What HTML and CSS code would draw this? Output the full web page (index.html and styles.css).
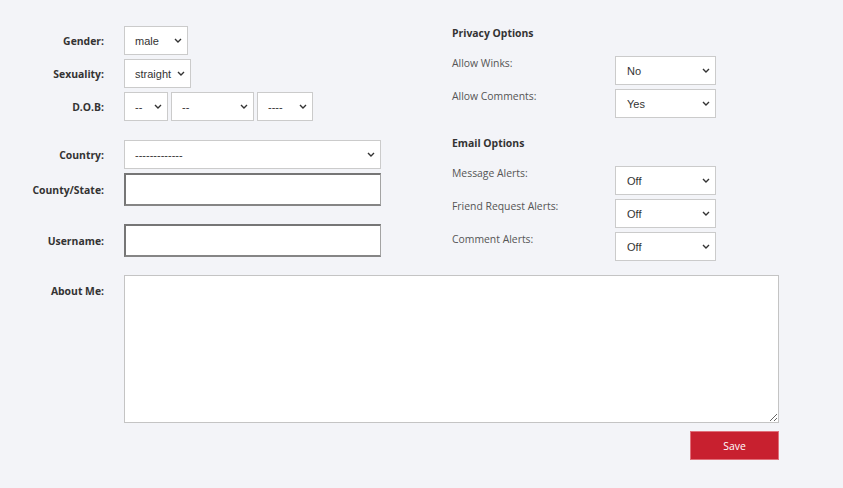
FILE: index.html
```html
<!DOCTYPE html>
<html>
<head>
<meta charset="utf-8">
<link rel="stylesheet" href="styles.css">
</head>
<body>
<form class="page">
  <div class="top">
    <div class="left">
      <div class="row">
        <label class="lbl">Gender:</label>
        <select class="sel w-gender"><option>male</option></select>
      </div>
      <div class="row">
        <label class="lbl">Sexuality:</label>
        <select class="sel w-sex"><option>straight</option></select>
      </div>
      <div class="row">
        <label class="lbl">D.O.B:</label>
        <div class="dob">
          <select class="sel w-d1"><option>--</option></select>
          <select class="sel w-d2"><option>--</option></select>
          <select class="sel w-d3"><option>----</option></select>
        </div>
      </div>
      <div class="row sp">
        <label class="lbl">Country:</label>
        <select class="sel w-wide"><option>-------------</option></select>
      </div>
      <div class="row">
        <label class="lbl">County/State:</label>
        <input class="txt" type="text">
      </div>
      <div class="row sp2">
        <label class="lbl">Username:</label>
        <input class="txt" type="text">
      </div>
    </div>
    <div class="right">
      <h3 class="head">Privacy Options</h3>
      <div class="opt">
        <span class="olbl">Allow Winks:</span>
        <select class="sel w-opt"><option>No</option></select>
      </div>
      <div class="opt">
        <span class="olbl">Allow Comments:</span>
        <select class="sel w-opt"><option>Yes</option></select>
      </div>
      <h3 class="head head2">Email Options</h3>
      <div class="opt">
        <span class="olbl">Message Alerts:</span>
        <select class="sel w-opt"><option>Off</option></select>
      </div>
      <div class="opt">
        <span class="olbl">Friend Request Alerts:</span>
        <select class="sel w-opt"><option>Off</option></select>
      </div>
      <div class="opt">
        <span class="olbl">Comment Alerts:</span>
        <select class="sel w-opt"><option>Off</option></select>
      </div>
    </div>
  </div>
  <div class="about">
    <label class="lbl lbl-top">About Me:</label>
    <textarea class="area"></textarea>
  </div>
  <div class="actions">
    <button type="button" class="save">Save</button>
  </div>
</form>
</body>
</html>
```

FILE: styles.css
```css
html, body {
  margin: 0;
  padding: 0;
  background: #f3f4f8;
}
body {
  font-family: "Open Sans", "Liberation Sans", sans-serif;
  color: #333;
}
.page {
  padding-top: 26px;
  width: 779px;
}
.top {
  display: flex;
  align-items: flex-start;
}
.left {
  width: 452px;
  display: flex;
  flex-direction: column;
  gap: 4px;
}
.row {
  display: flex;
  align-items: center;
  gap: 20px;
}
.row.sp {
  margin-top: 15px;
}
.row.sp2 {
  margin-top: 14px;
}
.lbl {
  width: 104px;
  flex: none;
  text-align: right;
  font-size: 10.4px;
  font-weight: 700;
  color: #333;
}
.lbl-top {
  padding-top: 9px;
}
.sel {
  -webkit-appearance: none;
  appearance: none;
  height: 29px;
  border: 1px solid #cbcbcb;
  border-radius: 0;
  background-color: #fff;
  background-image: url("data:image/svg+xml,%3Csvg xmlns='http://www.w3.org/2000/svg' width='8' height='5' viewBox='0 0 8 5'%3E%3Cpath d='M1 1l3 3 3-3' fill='none' stroke='%23333' stroke-width='1.4'/%3E%3C/svg%3E");
  background-repeat: no-repeat;
  background-position: right 5px center;
  background-size: 8px 5px;
  font-family: "Liberation Sans", Arial, sans-serif;
  font-size: 11px;
  color: #333;
  padding: 0 14px 0 10px;
  margin: 0;
  box-sizing: border-box;
}
.w-gender { width: 64px; }
.w-sex { width: 67px; }
.w-d1 { width: 44px; }
.w-d2 { width: 83px; }
.w-d3 { width: 56px; }
.w-wide { width: 257px; }
.w-opt { width: 101px; padding-left: 11px; }
.dob {
  display: flex;
  gap: 3px;
}
.txt {
  width: 257px;
  height: 33px;
  box-sizing: border-box;
  border-style: solid;
  border-width: 2px 1px 2px 2px;
  border-color: #767676 #a3a3a3 #858585 #767676;
  background: #fff;
  margin: 0;
  padding: 0 4px;
}
.right {
  width: 264px;
  display: flex;
  flex-direction: column;
  gap: 4px;
}
.head {
  margin: 0 0 11px;
  font-size: 10.4px;
  font-weight: 700;
  line-height: 15px;
  color: #333;
}
.head2 {
  margin-top: 14px;
}
.opt {
  display: flex;
  align-items: flex-start;
}
.olbl {
  width: 163px;
  flex: none;
  font-size: 10.4px;
  line-height: 15px;
  color: #555;
}
.about {
  display: flex;
  align-items: flex-start;
  gap: 20px;
  margin-top: 14px;
}
.area {
  width: 655px;
  height: 148px;
  box-sizing: border-box;
  border: 1px solid #c4c4c4;
  background: #fff;
  margin: 0;
  resize: both;
}
.actions {
  display: flex;
  justify-content: flex-end;
  margin-top: 8px;
}
.save {
  width: 89px;
  height: 29px;
  background: #c8202f;
  border: 1px solid #e0707a;
  color: #fff;
  font-family: "Open Sans", "Liberation Sans", sans-serif;
  font-size: 10.4px;
  margin: 0;
  padding: 0;
}
```
